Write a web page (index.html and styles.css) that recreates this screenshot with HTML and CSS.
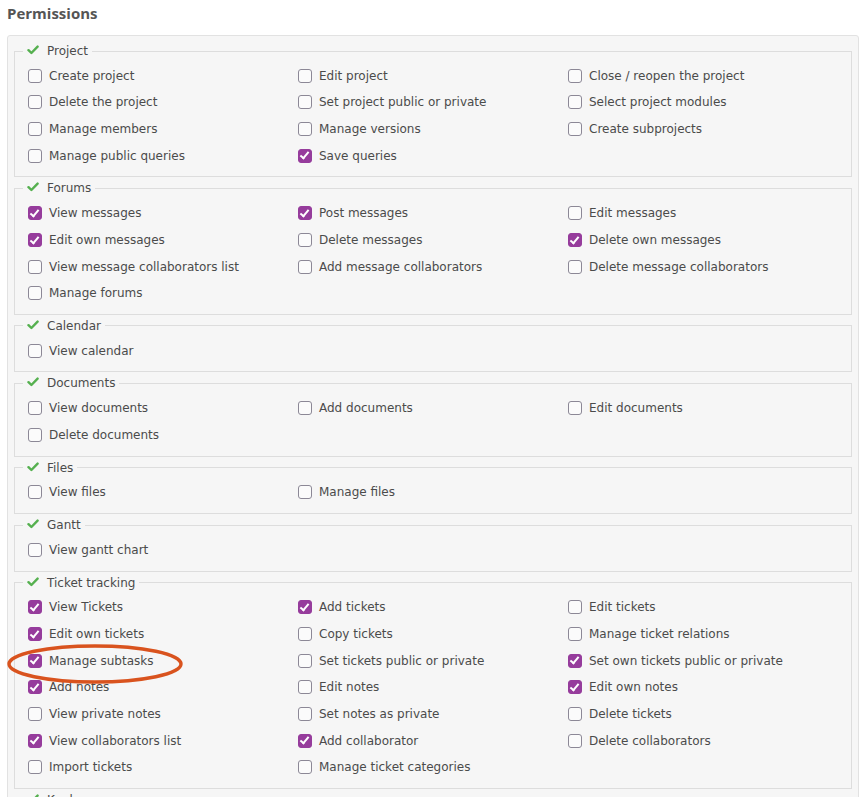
FILE: index.html
```html
<!DOCTYPE html>
<html>
<head>
<meta charset="utf-8">
<link rel="stylesheet" href="styles.css">
</head>
<body>
<h3 class="title">Permissions</h3>
<div class="box">
  <fieldset class="group">
    <legend class="legend"><svg class="tick" viewBox="0 0 12 10" width="12" height="10"><path d="M1.5 5.2 L4.4 8 L10.6 1.6" fill="none" stroke="#55b04f" stroke-width="2.4" stroke-linecap="round" stroke-linejoin="round"/></svg>Project</legend>
    <div class="grid">
      <label class="perm"><span class="cb"></span>Create project</label>
      <label class="perm"><span class="cb"></span>Edit project</label>
      <label class="perm"><span class="cb"></span>Close / reopen the project</label>
      <label class="perm"><span class="cb"></span>Delete the project</label>
      <label class="perm"><span class="cb"></span>Set project public or private</label>
      <label class="perm"><span class="cb"></span>Select project modules</label>
      <label class="perm"><span class="cb"></span>Manage members</label>
      <label class="perm"><span class="cb"></span>Manage versions</label>
      <label class="perm"><span class="cb"></span>Create subprojects</label>
      <label class="perm"><span class="cb"></span>Manage public queries</label>
      <label class="perm"><span class="cb on"></span>Save queries</label>
    </div>
  </fieldset>
  <fieldset class="group">
    <legend class="legend"><svg class="tick" viewBox="0 0 12 10" width="12" height="10"><path d="M1.5 5.2 L4.4 8 L10.6 1.6" fill="none" stroke="#55b04f" stroke-width="2.4" stroke-linecap="round" stroke-linejoin="round"/></svg>Forums</legend>
    <div class="grid">
      <label class="perm"><span class="cb on"></span>View messages</label>
      <label class="perm"><span class="cb on"></span>Post messages</label>
      <label class="perm"><span class="cb"></span>Edit messages</label>
      <label class="perm"><span class="cb on"></span>Edit own messages</label>
      <label class="perm"><span class="cb"></span>Delete messages</label>
      <label class="perm"><span class="cb on"></span>Delete own messages</label>
      <label class="perm"><span class="cb"></span>View message collaborators list</label>
      <label class="perm"><span class="cb"></span>Add message collaborators</label>
      <label class="perm"><span class="cb"></span>Delete message collaborators</label>
      <label class="perm"><span class="cb"></span>Manage forums</label>
    </div>
  </fieldset>
  <fieldset class="group">
    <legend class="legend"><svg class="tick" viewBox="0 0 12 10" width="12" height="10"><path d="M1.5 5.2 L4.4 8 L10.6 1.6" fill="none" stroke="#55b04f" stroke-width="2.4" stroke-linecap="round" stroke-linejoin="round"/></svg>Calendar</legend>
    <div class="grid">
      <label class="perm"><span class="cb"></span>View calendar</label>
    </div>
  </fieldset>
  <fieldset class="group">
    <legend class="legend"><svg class="tick" viewBox="0 0 12 10" width="12" height="10"><path d="M1.5 5.2 L4.4 8 L10.6 1.6" fill="none" stroke="#55b04f" stroke-width="2.4" stroke-linecap="round" stroke-linejoin="round"/></svg>Documents</legend>
    <div class="grid">
      <label class="perm"><span class="cb"></span>View documents</label>
      <label class="perm"><span class="cb"></span>Add documents</label>
      <label class="perm"><span class="cb"></span>Edit documents</label>
      <label class="perm"><span class="cb"></span>Delete documents</label>
    </div>
  </fieldset>
  <fieldset class="group">
    <legend class="legend"><svg class="tick" viewBox="0 0 12 10" width="12" height="10"><path d="M1.5 5.2 L4.4 8 L10.6 1.6" fill="none" stroke="#55b04f" stroke-width="2.4" stroke-linecap="round" stroke-linejoin="round"/></svg>Files</legend>
    <div class="grid">
      <label class="perm"><span class="cb"></span>View files</label>
      <label class="perm"><span class="cb"></span>Manage files</label>
    </div>
  </fieldset>
  <fieldset class="group">
    <legend class="legend"><svg class="tick" viewBox="0 0 12 10" width="12" height="10"><path d="M1.5 5.2 L4.4 8 L10.6 1.6" fill="none" stroke="#55b04f" stroke-width="2.4" stroke-linecap="round" stroke-linejoin="round"/></svg>Gantt</legend>
    <div class="grid">
      <label class="perm"><span class="cb"></span>View gantt chart</label>
    </div>
  </fieldset>
  <fieldset class="group tickets">
    <legend class="legend"><svg class="tick" viewBox="0 0 12 10" width="12" height="10"><path d="M1.5 5.2 L4.4 8 L10.6 1.6" fill="none" stroke="#55b04f" stroke-width="2.4" stroke-linecap="round" stroke-linejoin="round"/></svg>Ticket tracking</legend>
    <div class="grid">
      <label class="perm"><span class="cb on"></span>View Tickets</label>
      <label class="perm"><span class="cb on"></span>Add tickets</label>
      <label class="perm"><span class="cb"></span>Edit tickets</label>
      <label class="perm"><span class="cb on"></span>Edit own tickets</label>
      <label class="perm"><span class="cb"></span>Copy tickets</label>
      <label class="perm"><span class="cb"></span>Manage ticket relations</label>
      <label class="perm"><span class="cb on"></span>Manage subtasks</label>
      <label class="perm"><span class="cb"></span>Set tickets public or private</label>
      <label class="perm"><span class="cb on"></span>Set own tickets public or private</label>
      <label class="perm"><span class="cb on"></span>Add notes</label>
      <label class="perm"><span class="cb"></span>Edit notes</label>
      <label class="perm"><span class="cb on"></span>Edit own notes</label>
      <label class="perm"><span class="cb"></span>View private notes</label>
      <label class="perm"><span class="cb"></span>Set notes as private</label>
      <label class="perm"><span class="cb"></span>Delete tickets</label>
      <label class="perm"><span class="cb on"></span>View collaborators list</label>
      <label class="perm"><span class="cb on"></span>Add collaborator</label>
      <label class="perm"><span class="cb"></span>Delete collaborators</label>
      <label class="perm"><span class="cb"></span>Import tickets</label>
      <label class="perm"><span class="cb"></span>Manage ticket categories</label>
    </div>
    <svg class="annot" width="180" height="44" viewBox="0 0 180 44"><ellipse cx="89" cy="21" rx="86" ry="18" fill="none" stroke="#d9531e" stroke-width="3.4"/></svg>
  </fieldset>
  <fieldset class="group">
    <legend class="legend"><svg class="tick" viewBox="0 0 12 10" width="12" height="10"><path d="M1.5 5.2 L4.4 8 L10.6 1.6" fill="none" stroke="#55b04f" stroke-width="2.4" stroke-linecap="round" stroke-linejoin="round"/></svg>Kanban</legend>
    <div class="grid">
      <label class="perm"><span class="cb on"></span>View kanban</label>
      <label class="perm"><span class="cb"></span>Manage kanban</label>
    </div>
  </fieldset>
</div>
</body>
</html>
```

FILE: styles.css
```css
html, body {
  margin: 0;
  padding: 0;
  background: #ffffff;
}
body {
  font-family: "DejaVu Sans", Verdana, sans-serif;
  font-size: 12px;
  color: #4b4b4b;
  overflow: hidden;
}
.title {
  margin: 0;
  padding: 3px 0 0 7px;
  height: 35px;
  box-sizing: border-box;
  font-family: "Open Sans", sans-serif;
  font-weight: 700;
  font-size: 15px;
  line-height: 20px;
  color: #555555;
}
.box {
  margin: 0 1px 0 7px;
  border: 1px solid #e2e2e2;
  border-radius: 3px;
  background: #f6f6f6;
  padding: 7px 6px 6px 6px;
}
.group {
  margin: 0 0 3px 0;
  padding: 3.5px 8px 7.33px 8px;
  border: 1px solid #dddddd;
  position: relative;
}
.legend {
  padding: 0 4px;
  line-height: 16px;
  display: flex;
  align-items: center;
  gap: 8px;
  color: #4b4b4b;
}
.tick {
  display: block;
  flex: none;
  margin-top: -2px;
}
.grid {
  display: grid;
  grid-template-columns: repeat(3, 270px);
  grid-auto-rows: 26.67px;
  padding-left: 5px;
}
.perm {
  display: flex;
  align-items: center;
  gap: 7px;
  white-space: nowrap;
}
.cb {
  width: 14px;
  height: 14px;
  box-sizing: border-box;
  border: 1.6px solid #8c8896;
  border-radius: 3px;
  background: #fbfbfb;
  flex: none;
  position: relative;
}
.cb.on {
  border-color: #963c9c;
  background: #963c9c;
}
.cb.on::after {
  content: "";
  position: absolute;
  left: 3.4px;
  top: 0.6px;
  width: 3.4px;
  height: 7px;
  border: solid #ffffff;
  border-width: 0 2px 2px 0;
  transform: rotate(40deg);
}
.annot {
  position: absolute;
  left: -9px;
  top: 52px;
  pointer-events: none;
}
```
